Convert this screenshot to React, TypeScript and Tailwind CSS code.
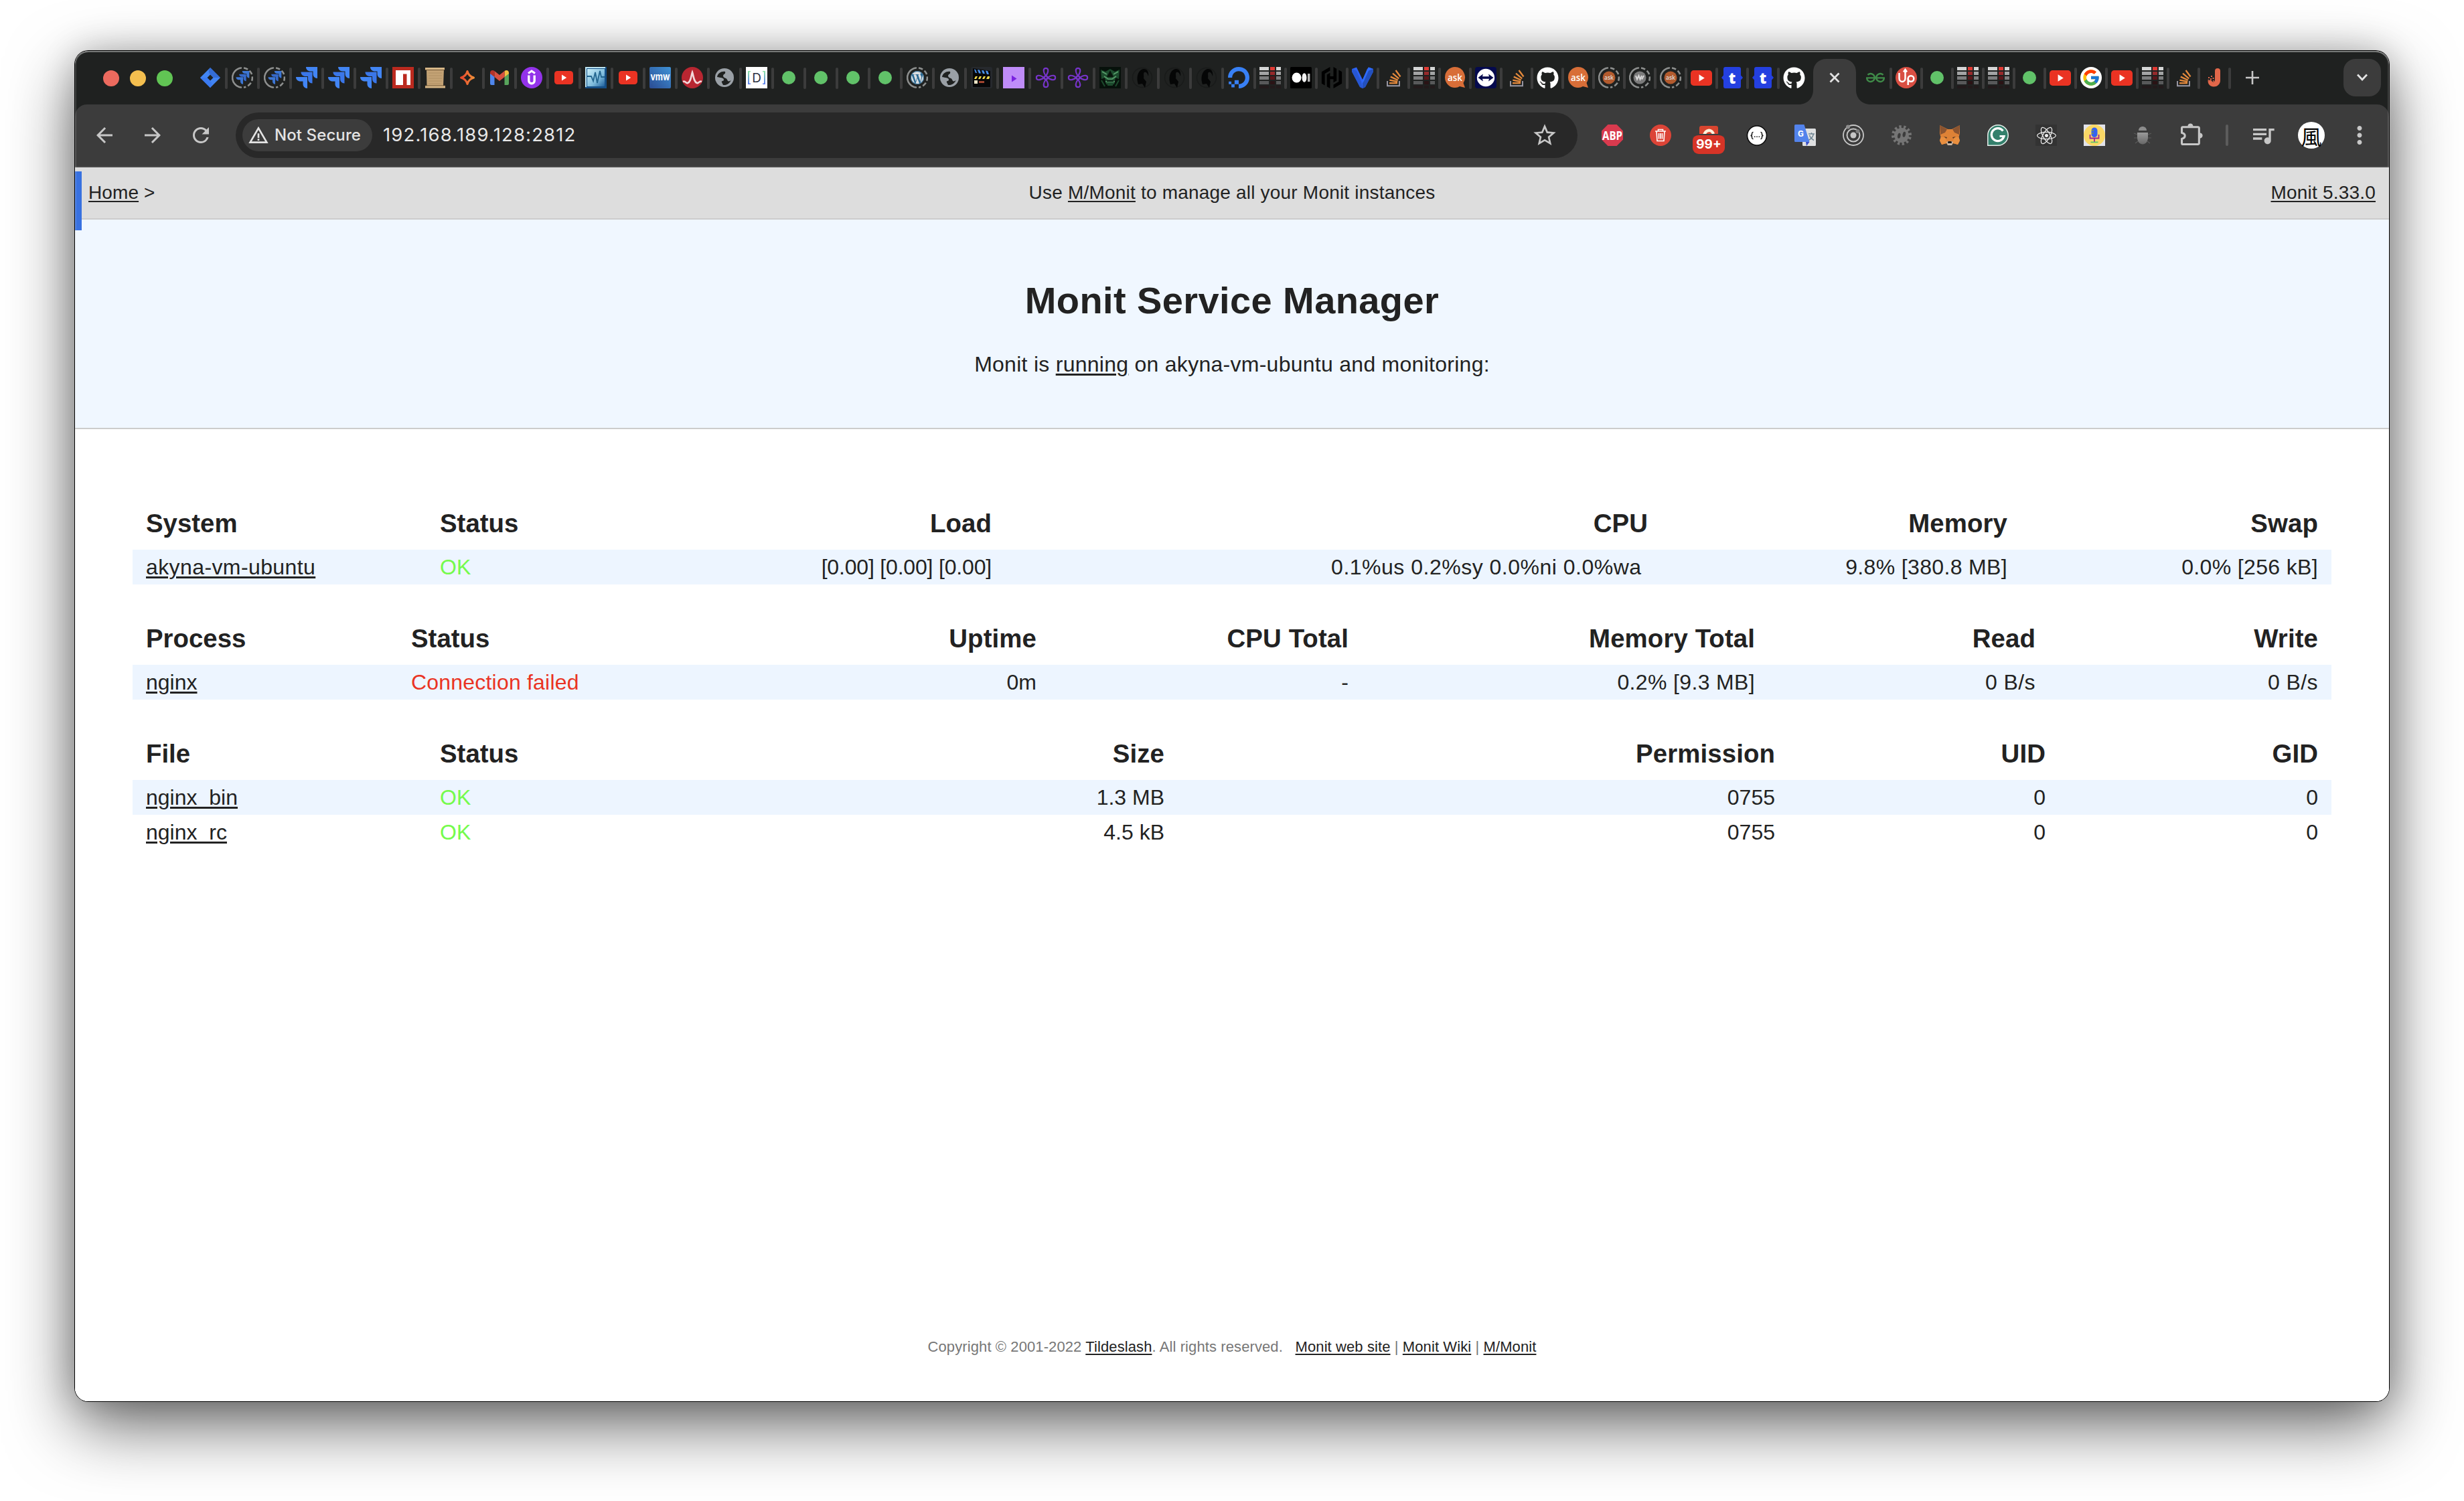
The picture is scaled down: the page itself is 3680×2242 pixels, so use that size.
import React from "react";
import { FcGoogle } from "react-icons/fc";
import { FaGithub, FaReact } from "react-icons/fa";
import {
  MdArrowBack,
  MdArrowForward,
  MdRefresh,
  MdStarBorder,
  MdMoreVert,
  MdQueueMusic,
  MdWarningAmber,
} from "react-icons/md";
import {
  SiWordpress,
  SiDigitalocean,
  SiHashicorp,
  SiGeeksforgeeks,
} from "react-icons/si";

/* ---------- favicons ---------- */

const JiraDiamond = () => (
  <svg className="size-8" viewBox="0 0 32 32">
    <path d="M16 1 31 16 16 31 1 16Z" fill="#4285f4" />
    <path d="M16 1c-3 4-3 7 0 10l5 5 10 0Z" fill="#2f62c9" opacity=".7" />
    <path d="M16 31c3-4 3-7 0-10l-5-5H1Z" fill="#3b7bf2" />
    <path d="M16 11.500 20.500 16 16 20.500 11.500 16Z" fill="#1f2120" />
  </svg>
);

const arrowPath = "M0 0H17V17C13 17 10.500 14 10.500 10.500V6.500H7C3 6.500 0 4 0 0Z";

const Arrows = () => (
  <>
    <path d={arrowPath} transform="translate(15 0)" fill="#4285f4" />
    <path d={arrowPath} transform="translate(7.500 7.500)" fill="#3a76e8" />
    <path d={arrowPath} transform="translate(0 15)" fill="#4285f4" />
  </>
);

const JiraArrows = () => (
  <svg className="size-8" viewBox="0 0 32 32">
    <Arrows />
  </svg>
);

const DashedRing = () => (
  <>
    <path d="M14 1.500A14.600 14.600 0 0 0 14 30.500" fill="none" stroke="#8d8f8e" strokeWidth="2.600" strokeLinecap="round" />
    <path
      d="M18 1.500A14.600 14.600 0 0 1 18 30.500"
      fill="none"
      stroke="#8d8f8e"
      strokeWidth="2.600"
      strokeDasharray="6.500 3.200"
    />
  </>
);

const JiraPending = () => (
  <svg className="size-8" viewBox="0 0 32 32">
    <DashedRing />
    <g transform="translate(6.500 6) scale(.62)" opacity=".85">
      <Arrows />
    </g>
  </svg>
);

const Npm = () => (
  <svg className="size-8" viewBox="0 0 32 32">
    <path d="M0 0H32V32H0Z" fill="#bb2a1f" />
    <path d="M5 5H27V27H21.500V10.500H16V27H5Z" fill="#fff" />
  </svg>
);

const Scroll = () => (
  <svg className="size-8" viewBox="0 0 32 32">
    <path d="M3 3H29L28 29H3.500Z" fill="#c3a274" />
    <path d="M1 1H30V5H1ZM1 28H31V31.500H1Z" fill="#d8b888" />
    <path d="M1 4.500H30M1 28H31" stroke="#6d5233" strokeWidth="1.200" />
    <path d="M6 9H26M6 13H26M6 17H26M6 21H26M6 25H24" stroke="#b09064" strokeWidth="1" />
  </svg>
);

const Spark = () => (
  <svg className="size-8" viewBox="0 0 32 32">
    <defs>
      <linearGradient id="spark" x1="0" x2="1">
        <stop offset="0" stopColor="#e8452c" />
        <stop offset="1" stopColor="#f08f3a" />
      </linearGradient>
    </defs>
    <path
      d="M16 6.500C17.500 12 20 14.500 25.500 16C20 17.500 17.500 20 16 25.500C14.500 20 12 17.500 6.500 16C12 14.500 14.500 12 16 6.500Z"
      fill="none"
      stroke="url(#spark)"
      strokeWidth="3"
      strokeLinejoin="round"
    />
  </svg>
);

const Gmail = () => (
  <svg className="size-8" viewBox="0 0 32 32">
    <path d="M2 9V25a2 2 0 0 0 2 2H8.500V14Z" fill="#4f86ec" />
    <path d="M30 9V25a2 2 0 0 1-2 2H23.500V14Z" fill="#58a55c" />
    <path d="M2 9C2 5 5.500 4 8.500 6V15L2 10Z" fill="#b5332a" />
    <path d="M30 9C30 5 26.500 4 23.500 6V15L30 10Z" fill="#f2be42" />
    <path d="M8.500 6 16 12 23.500 6V15L16 21 8.500 15Z" fill="#d85140" />
  </svg>
);

const Udemy = () => (
  <svg className="size-8" viewBox="0 0 32 32">
    <circle cx="16" cy="16" r="16" fill="#9333ea" />
    <path d="M11 9.500 16 6 21 9.500" fill="none" stroke="#fff" strokeWidth="3" />
    <path d="M11.800 12.500V20.500a4.200 4.200 0 0 0 8.400 0V12.500" fill="none" stroke="#fff" strokeWidth="3.400" />
  </svg>
);

const YouTube = () => (
  <svg className="h-5 w-7" viewBox="0 0 28 20">
    <rect width="28" height="20" rx="4.500" fill="#ea3323" />
    <path d="M11 5.500 18.200 10 11 14.500Z" fill="#fff" />
  </svg>
);

const YouTubeLarge = () => (
  <svg className="h-[23px] w-8" viewBox="0 0 28 20">
    <rect width="28" height="20" rx="4" fill="#ea3323" />
    <path d="M11 5.500 18.200 10 11 14.500Z" fill="#fff" />
  </svg>
);

const Monitor = () => (
  <svg className="size-8" viewBox="0 0 32 32">
    <defs>
      <linearGradient id="mon" x1="0" y1="0" x2="1" y2="1">
        <stop offset="0" stopColor="#c9eef8" />
        <stop offset=".6" stopColor="#7fbcdc" />
        <stop offset="1" stopColor="#1d5f9c" />
      </linearGradient>
    </defs>
    <path d="M0 0H32V32H0Z" fill="#154f86" />
    <path d="M0 0H30V2H2V30H0Z" fill="#bfe7f4" />
    <path d="M3 3H29V29H3Z" fill="url(#mon)" />
    <path d="M3 14H9L12 21 15 8 18 24 22 6 24 15H29" fill="none" stroke="#23668f" strokeWidth="1.800" />
  </svg>
);

const Vmw = () => (
  <svg className="size-8" viewBox="0 0 32 32">
    <defs>
      <linearGradient id="vmw" x1="1" y1="0" x2="0" y2="1">
        <stop offset="0" stopColor="#3f92d6" />
        <stop offset="1" stopColor="#2a4b92" />
      </linearGradient>
    </defs>
    <rect width="32" height="32" rx="2" fill="url(#vmw)" />
    <text x="16" y="20" textAnchor="middle" fontSize="15" fontWeight="700" textLength="29" lengthAdjust="spacingAndGlyphs" fill="#fff" fontFamily="Inter, sans-serif">vmw</text>
  </svg>
);

const RedPulse = () => (
  <svg className="size-8" viewBox="0 0 32 32">
    <circle cx="16" cy="16" r="16" fill="#b82631" />
    <path d="M2 22C6 20 6 25 9 24C14 22 14 14 16 8C18 14 18 22 23 24C26 25 26 20 30 22" fill="none" stroke="#f3d9dc" strokeWidth="2.600" />
  </svg>
);

const Globe = () => (
  <svg className="size-7" viewBox="0 0 28 28">
    <circle cx="14" cy="14" r="14" fill="#9aa0a6" />
    <path d="M3 13C8 14 13 14 13 17C13 20 9 18 10 21L12 25C18 25.500 22 22 23.500 18C21 20 19 20 18 17C17 14 12 15 12 11C13 8 16 9 15 5C10 4 4 7 3 13Z" fill="#1f2120" />
  </svg>
);

const BracketD = () => (
  <svg className="size-8" viewBox="0 0 32 32">
    <defs>
      <linearGradient id="brk" x1="0" y1="0" x2="0" y2="1">
        <stop offset="0" stopColor="#8ee6a4" />
        <stop offset="1" stopColor="#5b7cf0" />
      </linearGradient>
    </defs>
    <path d="M0 0H32V32H0Z" fill="#fff" />
    <path d="M7 6H3V26H7V24.500H5V7.500H7ZM25 6H29V26H25V24.500H27V7.500H25Z" fill="url(#brk)" />
    <text x="16" y="22.500" textAnchor="middle" fontSize="19" fill="#2b3240" fontFamily="Inter, sans-serif">D</text>
  </svg>
);

const Dot = () => <span className="size-5 rounded-full bg-[#61c269]" />;

const WordpressPending = () => (
  <span className="relative flex size-8 items-center justify-center">
    <svg className="absolute inset-0 size-8" viewBox="0 0 32 32">
      <DashedRing />
    </svg>
    <span className="flex size-5 items-center justify-center rounded-full bg-[#d9dde0]">
      <SiWordpress className="size-5 text-[#2b6a94]" />
    </span>
  </span>
);

const Clapper = () => (
  <svg className="size-8" viewBox="0 0 32 32">
    <rect width="32" height="32" rx="3" fill="#26292d" />
    <path d="M3 2 29 6V30H3Z" fill="#060708" />
    <path d="M5 3.500 27 6V11L5 9Z" fill="#0c1016" />
    <path d="M5 3.500 7 4 9 9H7ZM10 4 13 4.500 15 9.500H12ZM16 5 19 5.300 21 10H18ZM22 5.500 25 6 27 11H24Z" fill="#4a94f0" />
    <path d="M7 14H10L8 18H5ZM13 14H16L14 18H11ZM19 14H22L20 18H17ZM25 14H28V16L27 18H23Z" fill="#f2dc4c" />
    <path d="M5 20H10V25H5Z" fill="#e9e2c4" />
    <path d="M12 21H20V24H12Z" fill="#a1452f" />
  </svg>
);

const PurplePlay = () => (
  <svg className="size-8" viewBox="0 0 32 32">
    <path d="M0 0H32V32H0Z" fill="#bf8cf8" />
    <path d="M13 12.500 20.500 17.500 13 22.500Z" fill="#7a22e0" />
  </svg>
);

const Clover = () => (
  <svg className="size-8" viewBox="0 0 32 32">
    <g fill="none" stroke="#7634c8" strokeWidth="2.200">
      <path d="M16 13.500C13 9 12.500 7 12.800 4.500C13.200 1 18.800 1 19.200 4.500C19.500 7 19 9 16 13.500Z" />
      <path d="M16 18.500C13 23 12.500 25 12.800 27.500C13.200 31 18.800 31 19.200 27.500C19.500 25 19 23 16 18.500Z" />
      <path d="M13.500 16C9 13 7 12.500 4.500 12.800C1 13.200 1 18.800 4.500 19.200C7 19.500 9 19 13.500 16Z" />
      <path d="M18.500 16C23 13 25 12.500 27.500 12.800C31 13.200 31 18.800 27.500 19.200C25 19.500 23 19 18.500 16Z" />
      <circle cx="16" cy="16" r="2.500" />
    </g>
  </svg>
);

const GreenFace = () => (
  <svg className="size-8" viewBox="0 0 32 32">
    <path d="M0 0H32V32H0Z" fill="#07110b" />
    <path d="M2 4 9 7 16 3 23 7 30 4 29 18 24 16 22 26H10L8 16 3 18Z" fill="#1d4c2e" />
    <path d="M4 7 11 11M28 7 21 11M7 14 13 18H19L25 14M9 22H23" stroke="#5aa06d" strokeWidth="1.600" fill="none" />
    <path d="M16 5 21 15H11Z" fill="#08140c" />
    <path d="M11 20H21V22H11Z" fill="#0b2013" />
    <path d="M3 20 8 29M29 20 24 29M12 27H20" stroke="#1c4a2c" strokeWidth="2" />
  </svg>
);

const Goat = () => (
  <svg className="size-8" viewBox="0 0 32 32">
    <circle cx="16" cy="16" r="14.500" fill="none" stroke="#191b1a" strokeWidth="1.500" />
    <path d="M10 26C7 18 8 6 17 3C24 2 26 8 25 14C24 10 22 7 19 8C17 10 19 14 18 17L22 22 20 31 16 25Z" fill="#050606" />
  </svg>
);

const DigitalOcean = () => <SiDigitalocean className="size-8 text-[#3880f5]" />;

const stripeSides = ["#d4d5d5", "#a3a4a5", "#7c7d7e", "#58595a", "#231a1b"];
const stripeMids = ["#e03a34", "#962a2b", "#5b1619", "#2a1315", "#231a1b"];
const Stripes = () => (
  <svg className="size-8" viewBox="0 0 32 32">
    {stripeSides.map((c, i) => (
      <g key={c}>
        <rect x="0" y={i * 7} width="14" height={i === 4 ? 4 : 5} fill={c} />
        <rect x="16" y={i * 7} width="7" height={i === 4 ? 4 : 5} fill={stripeMids[i]} />
        <rect x="25" y={i * 7} width="7" height={i === 4 ? 4 : 5} fill={c} />
      </g>
    ))}
  </svg>
);

const Medium = () => (
  <svg className="size-8" viewBox="0 0 32 32">
    <rect width="32" height="32" rx="1.500" fill="#000" />
    <ellipse cx="9.500" cy="16" rx="7" ry="7.500" fill="#fff" />
    <ellipse cx="21" cy="16" rx="3.500" ry="6.800" fill="#f3f3f3" />
    <path d="M26 10H29.500V22H26Z" fill="#b9b9b9" />
  </svg>
);

const Hashicorp = () => <SiHashicorp className="size-8 text-black" />;

const Vagrant = () => (
  <svg className="size-8" viewBox="0 0 32 32">
    <path d="M0 3 7 .5 16 19 25 .5 32 3V7L20 30 16 32 12 30 0 7Z" fill="#2e63f5" />
    <path d="M23 3 32 3V7L20 30 16 32V24Z" fill="#2350bd" />
    <path d="M23 3 25 .5 32 3 25 5.500 18 21 16 24V19Z" fill="#2e6bff" />
    <path d="M0 3 7 5.500 14 22 16 32 12 30 0 7Z" fill="#2350bd" opacity=".6" />
  </svg>
);

const StackOverflow = () => (
  <svg className="size-8" viewBox="0 0 32 32">
    <path d="M7 21V28.200H25V21" fill="none" stroke="#9c9aa6" strokeWidth="1.900" />
    <path d="M10 24.200H22" stroke="#e58a3c" strokeWidth="2.300" />
    <path d="M10.300 19.700 22.200 22" stroke="#e58a3c" strokeWidth="2.300" />
    <path d="M11.800 14.600 22.800 19.800" stroke="#e58a3c" strokeWidth="2.300" />
    <path d="M15 9.600 24.200 17.300" stroke="#e58a3c" strokeWidth="2.300" />
    <path d="M19.500 5 26.500 14.500" stroke="#e58a3c" strokeWidth="2.300" />
  </svg>
);

const Ask = () => (
  <svg className="size-8" viewBox="0 0 32 32">
    <path d="M16 0A15 15.500 0 1 0 16 31C19 31 21 30 23 29L31 31 28.500 24A15 15.500 0 0 0 16 0Z" fill="#d86e38" />
    <text x="16" y="20.500" textAnchor="middle" fontSize="15" fontWeight="600" textLength="22" lengthAdjust="spacingAndGlyphs" fill="#fff" fontFamily="Open Sans, sans-serif">ask</text>
  </svg>
);

const AskPending = () => (
  <svg className="size-8" viewBox="0 0 32 32">
    <DashedRing />
    <circle cx="16" cy="16" r="9.500" fill="#b35b2e" />
    <text x="16" y="19" textAnchor="middle" fontSize="9.500" fontWeight="600" textLength="14" lengthAdjust="spacingAndGlyphs" fill="#ddd" fontFamily="Open Sans, sans-serif">ask</text>
  </svg>
);

const VvPending = () => (
  <svg className="size-8" viewBox="0 0 32 32">
    <DashedRing />
    <circle cx="16" cy="16" r="9.500" fill="#7b7b7b" />
    <path d="M10 13 12 18.500 14.500 13 16.500 18.500 19 13M19 18.500 22 13" fill="none" stroke="#d8d8d8" strokeWidth="2" />
  </svg>
);

const TeamViewer = () => (
  <svg className="size-8" viewBox="0 0 32 32">
    <rect width="32" height="32" rx="4" fill="#050a4e" />
    <circle cx="16" cy="16" r="13.200" fill="#fff" />
    <path d="M4.500 16 12 10.500 11 14.200H21L20 10.500 27.500 16 20 21.500 21 17.800H11L12 21.500Z" fill="#050a4e" />
  </svg>
);

const Github = () => <FaGithub className="size-[33px] text-white" />;

const TabT = () => (
  <svg className="size-8 overflow-visible" viewBox="0 0 32 32">
    <path d="M6 0H26A3 3 0 0 1 29 3V12.500L32 16 29 19.500V29A3 3 0 0 1 26 32H6A3 3 0 0 1 3 29V19.500L0 16 3 12.500V3A3 3 0 0 1 6 0Z" fill="#2440e0" />
    <text x="16" y="24.500" textAnchor="middle" fontSize="23" fontWeight="800" fill="#fff" fontFamily="Open Sans, sans-serif">t</text>
  </svg>
);

const Geeks = () => <SiGeeksforgeeks className="size-[28px] text-[#3f8a48]" />;

const Up = () => (
  <svg className="size-8" viewBox="0 0 32 32">
    <circle cx="16" cy="16" r="16" fill="#d94f43" />
    <path d="M5.500 9V17C5.500 23.500 14.500 23.500 14.500 17V5M12 7.500 14.500 4 17 7.500" fill="none" stroke="#fff" strokeWidth="2.500" />
    <circle cx="23" cy="17.500" r="4.300" fill="none" stroke="#fff" strokeWidth="2.500" />
    <path d="M18.700 17V27" stroke="#fff" strokeWidth="2.500" />
  </svg>
);

const Google = () => (
  <span className="flex size-8 items-center justify-center rounded-full bg-white">
    <FcGoogle className="size-7" />
  </span>
);

const JHook = () => (
  <svg className="size-8" viewBox="0 0 32 32">
    <path d="M17 6a4 4 0 0 1 8 0V20C25 32 7 33 6.500 21L11 19 13 22C15 23 17 22 17 19Z" fill="#e2674a" />
    <path d="M7 15h2v2H7ZM11 13h2v2h-2ZM10 17h2v2h-2ZM13.500 16h2v2h-2ZM6.500 19h2v1.500h-2ZM14 20h1.500v2H14Z" fill="#e2674a" />
  </svg>
);

const Tab48 = [
  JiraDiamond, JiraPending, JiraPending, JiraArrows, JiraArrows, JiraArrows, Npm, Scroll, Spark, Gmail, Udemy,
  YouTube, Monitor, YouTube, Vmw, RedPulse, Globe, BracketD, Dot, Dot, Dot, Dot, WordpressPending, Globe, Clapper,
  PurplePlay, Clover, Clover, GreenFace, Goat, Goat, Goat, DigitalOcean,
];
const Tab46 = [
  Stripes, Medium, Hashicorp, Vagrant, StackOverflow, Stripes, Ask, TeamViewer, StackOverflow, Github, Ask,
  AskPending, VvPending, AskPending, YouTubeLarge, TabT, TabT, Github,
];
const TabAfter = [
  Geeks, Up, Dot, Stripes, Stripes, Dot, YouTubeLarge, Google, YouTubeLarge, Stripes, StackOverflow, JHook,
];

function Tab({ wide, sep = true, children }: { wide?: boolean; sep?: boolean; children: React.ReactNode }) {
  return (
    <div className={wide ? "relative flex w-12 shrink-0 items-center justify-center" : "relative flex w-[46px] shrink-0 items-center justify-center"}>
      {children}
      {sep && <span className="absolute top-[25px] -right-0.5 h-8 w-1 rounded-full bg-[#3c3c3c]" />}
    </div>
  );
}

function TabStrip() {
  return (
    <div className="flex h-20 bg-[#1f2120]">
      <div className="flex w-[178px] items-center gap-4 pt-0.5 pl-[42px]">
        <span className="size-6 rounded-full bg-[#ec6a5e]" />
        <span className="size-6 rounded-full bg-[#f4bf4f]" />
        <span className="size-6 rounded-full bg-[#61c554]" />
      </div>
      {Tab48.map((Icon, i) => (
        <Tab key={i} wide>
          <Icon />
        </Tab>
      ))}
      {Tab46.map((Icon, i) => (
        <Tab key={i} sep={i < Tab46.length - 1}>
          <Icon />
        </Tab>
      ))}
      <div className="relative flex w-[76px] shrink-0 items-end justify-center">
        <svg className="absolute bottom-0 -left-4 h-[68px] w-[108px]" viewBox="0 0 108 68">
          <path d="M0 68C14 68 22 58 22 46V20C22 8 30 0 42 0H66C78 0 86 8 86 20V46C86 58 94 68 108 68Z" fill="#3c3c3c" />
        </svg>
        <svg className="relative mb-8 size-4" viewBox="0 0 16 16">
          <path d="M1.500 1.500 14.500 14.500M14.500 1.500 1.500 14.500" stroke="#e3e3e3" strokeWidth="2.800" />
        </svg>
      </div>
      {TabAfter.map((Icon, i) => (
        <Tab key={i}>
          <Icon />
        </Tab>
      ))}
      <div className="flex w-[68px] items-center justify-center">
        <svg className="size-5" viewBox="0 0 20 20">
          <path d="M10 0V20M0 10H20" stroke="#c7c7c7" strokeWidth="2.600" />
        </svg>
      </div>
      <div className="ml-auto flex w-[68px] items-center">
        <span className="flex size-14 items-center justify-center rounded-[18px] bg-[#3c3c3c]">
          <svg className="h-3 w-4" viewBox="0 0 16 12">
            <path d="M1 1.500 8 9 15 1.500" fill="none" stroke="#e3e3e3" strokeWidth="2.800" />
          </svg>
        </span>
      </div>
    </div>
  );
}

/* ---------- extensions ---------- */

const Abp = () => (
  <svg className="size-8" viewBox="0 0 32 32">
    <path d="M9.400 0H22.600L32 9.400V22.600L22.600 32H9.400L0 22.600V9.400Z" fill="#d93a4e" />
    <text x="16" y="22.500" textAnchor="middle" fontSize="18" fontWeight="700" textLength="30" lengthAdjust="spacingAndGlyphs" fill="#fff" fontFamily="Open Sans, sans-serif">ABP</text>
  </svg>
);

const Trash = () => (
  <svg className="size-8" viewBox="0 0 32 32">
    <circle cx="16" cy="16" r="16" fill="#dc4437" />
    <path d="M8 10H24M12.500 10V7.500H19.500V10M10 10 11 24.500H21L22 10M13.500 13V21.500M16 13V21.500M18.500 13V21.500" fill="none" stroke="#fff" strokeWidth="1.600" />
  </svg>
);

const Count = () => (
  <span className="relative size-8">
    <svg className="size-8" viewBox="0 0 32 32">
      <rect x="2" y="2" width="28" height="28" rx="3" fill="#d9452f" />
      <path d="M9.500 16A7 8 0 0 1 23 14" fill="none" stroke="#fff3dc" strokeWidth="4.500" />
    </svg>
    <span className="absolute top-[14px] -left-2 flex h-[30px] w-12 items-center justify-center rounded-[9px] border-t-2 border-[#3c3c3c] bg-[#d73427] font-['Inter'] text-[19px] font-bold text-white">
      99+
    </span>
  </span>
);

const Braces = () => (
  <svg className="size-8" viewBox="0 0 32 32">
    <circle cx="16" cy="16.500" r="14.500" fill="#fff" stroke="#0b0b0b" strokeWidth="1.600" />
    <g fill="none" stroke="#111" strokeWidth="1.500">
      <path d="M10.500 11.500C8.500 11.500 8.500 12.500 8.500 14.500C8.500 16 8 16.500 6.500 16.500C8 16.500 8.500 17 8.500 18.500C8.500 20.500 8.500 21.500 10.500 21.500" />
      <path d="M21.500 11.500C23.500 11.500 23.500 12.500 23.500 14.500C23.500 16 24 16.500 25.500 16.500C24 16.500 23.500 17 23.500 18.500C23.500 20.500 23.500 21.500 21.500 21.500" />
    </g>
    <path d="M12 17.500H13.500V19H12ZM15.300 17.500H16.800V19H15.300ZM18.600 17.500H20.100V19H18.600Z" fill="#111" />
  </svg>
);

const Translate = () => (
  <svg className="size-8" viewBox="0 0 32 32">
    <rect x="12" y="6" width="20" height="26" rx="1.500" fill="#dfe0e1" />
    <path d="M21 14H30M25.500 12V14M28.500 14C27.500 19 24 22 21 23.500M22.500 16C23.500 19 26.500 22 29 23.500" fill="none" stroke="#6f8593" strokeWidth="1.500" />
    <path d="M17 26H22.500L18 32Z" fill="#3a4fc4" />
    <path d="M1.500 0H14.500L22.500 26H1.500A1.500 1.500 0 0 1 0 24.500V1.500A1.500 1.500 0 0 1 1.500 0Z" fill="#5383ec" />
    <text x="9.500" y="17.500" textAnchor="middle" fontSize="13" fontWeight="700" fill="#fff" fontFamily="Roboto, sans-serif">G</text>
  </svg>
);

const Rings = () => (
  <svg className="size-8" viewBox="0 0 32 32">
    <circle cx="16" cy="16" r="15" fill="none" stroke="#c6c6c6" strokeWidth="1.800" />
    <circle cx="16" cy="16" r="9.500" fill="none" stroke="#c6c6c6" strokeWidth="2" />
    <circle cx="16" cy="16" r="4.500" fill="#c6c6c6" />
    <circle cx="8" cy="3.500" r="3" fill="#8d8d8d" />
    <circle cx="22.500" cy="10" r="3" fill="#7d7d7d" />
  </svg>
);

const GearMark = () => (
  <svg className="size-8" viewBox="0 0 32 32">
    <g transform="rotate(12 16 16)">
      <circle cx="16" cy="16" r="12.500" fill="none" stroke="#757575" strokeWidth="5" strokeDasharray="3.200 3.350" />
      <circle cx="16" cy="16" r="11" fill="#757575" />
      <ellipse cx="12.500" cy="17.500" rx="2.200" ry="4" fill="#3c3c3c" />
      <ellipse cx="19.500" cy="14" rx="2.200" ry="4" fill="#3c3c3c" />
    </g>
  </svg>
);

const Fox = () => (
  <svg className="size-8" viewBox="0 0 32 32">
    <path d="M1 1 13 7H19L31 1V13L29.500 19 31 24 28 30 21 28 19 31H13L11 28 4 30 1 24 2.500 19 1 13Z" fill="#de8236" />
    <path d="M1 1 12 7 9 12 2 15ZM31 1 20 7 23 12 30 15Z" fill="#8b5430" />
    <path d="M2.500 19H9L12 27 11 28 4 30 1 24ZM29.500 19H23L20 27 21 28 28 30 31 24Z" fill="#e98f3f" />
    <path d="M7 18 12 19 11 21ZM25 18 20 19 21 21Z" fill="#5b3a22" />
    <path d="M11 26 13.500 25H18.500L21 26 19 31H13Z" fill="#c9b7a6" />
    <path d="M13.500 25H18.500L19 28H13Z" fill="#1a1a1a" />
  </svg>
);

const Grammarly = () => (
  <svg className="size-8" viewBox="0 0 32 32">
    <path d="M16 .8A15.200 15.200 0 1 1 16 31.200H.8V16A15.200 15.200 0 0 1 16 .8Z" fill="#34806c" stroke="#e7efec" strokeWidth="1.500" />
    <path d="M23.500 9.500A9.500 9.500 0 1 0 25 17.500H18.500" fill="none" stroke="#fff" strokeWidth="3.200" />
  </svg>
);

const ReactIcon = () => (
  <span className="flex size-8 items-center justify-center bg-[#333]">
    <FaReact className="size-[29px] text-[#ececec]" />
  </span>
);

const Mic = () => (
  <svg className="size-8" viewBox="0 0 32 32">
    <path d="M0 0H32V32H0Z" fill="#e2e3ea" />
    <circle cx="16" cy="16" r="16" fill="#fad866" />
    <rect x="11.500" y="4.500" width="9" height="14.500" rx="4.500" fill="#3563f0" />
    <path d="M12 9H15M12 13H15" stroke="#7f9a4a" strokeWidth="1.500" />
    <path d="M9.500 15V20.500H22.500V15M16 20.500V26" fill="none" stroke="#a0258f" strokeWidth="1.800" />
    <path d="M10.500 26.300H21.500" stroke="#5fc46a" strokeWidth="1.800" />
  </svg>
);

const Bug = () => (
  <svg className="size-8" viewBox="0 0 32 32">
    <defs>
      <linearGradient id="bug" x1="0" y1="0" x2="0" y2="1">
        <stop offset="0" stopColor="#9a9a9a" />
        <stop offset="1" stopColor="#686868" />
      </linearGradient>
    </defs>
    <path d="M10 9C10 1 22 1 22 9Z" fill="#8c8c8c" />
    <path d="M8 12H24V19C24 33 8 33 8 19Z" fill="url(#bug)" />
    <path d="M8 15 3 13M8 20H3M9 25 5 28M24 15 29 13M24 20H29M23 25 27 28" stroke="#5a5a5a" strokeWidth="1.200" />
  </svg>
);

const Puzzle = () => (
  <svg className="ml-0.5 size-[33px] -translate-y-0.5" viewBox="0 0 32 32">
    <path
      d="M1.500 14V7A1.500 1.500 0 0 1 3 5.500H25A1.500 1.500 0 0 1 26.500 7V29A1.500 1.500 0 0 1 25 30.500H3A1.500 1.500 0 0 1 1.500 29V22.500C7.500 21.500 7.500 15 1.500 14Z"
      fill="none"
      stroke="#c7c7c7"
      strokeWidth="3"
      strokeLinejoin="round"
    />
    <path d="M10 4.500C10 -1 18 -1 18 4.500ZM27.500 14C33 14 33 22 27.500 22Z" fill="#c7c7c7" />
  </svg>
);

const extensions = [Abp, Trash, Count, Braces, Translate, Rings, GearMark, Fox, Grammarly, ReactIcon, Mic, Bug, Puzzle];

function Toolbar() {
  return (
    <div className="bg-[#1f2120]">
      <div className="flex h-[94px] items-center rounded-t-[18px] border-b-2 border-[#4a4a4a] bg-[#3c3c3c] text-[#c7c7c7]">
        <div className="flex w-20 justify-center pl-2">
          <MdArrowBack className="size-9" />
        </div>
        <div className="flex w-[72px] justify-center">
          <MdArrowForward className="size-9" />
        </div>
        <div className="flex w-[72px] justify-center">
          <MdRefresh className="size-9" />
        </div>
        <div className="ml-4 flex h-[68px] w-[2004px] items-center rounded-full bg-[#282828] pr-[29px] pl-2.5">
          <div className="flex h-12 w-[194px] items-center rounded-full bg-[#3c3c3c] pl-2 text-[#e3e3e3]">
            <MdWarningAmber className="size-8 text-[#e3e3e3]" />
            <span className="ml-2 font-['Inter'] text-[24px] font-medium tracking-[0.1px] whitespace-nowrap">Not Secure</span>
          </div>
          <span className="ml-4 font-['Inter'] text-[27.500px] tracking-[1.150px] text-[#e8e8e8]">192.168.189.128:2812</span>
          <MdStarBorder className="ml-auto size-[40px]" />
        </div>
        <div className="ml-4 flex">
          {extensions.map((Icon, i) => (
            <div key={i} className="flex w-[72px] items-center justify-center">
              <Icon />
            </div>
          ))}
        </div>
        <div className="flex w-9 justify-center">
          <span className="h-8 w-1 rounded-full bg-[#5c5c5c]" />
        </div>
        <div className="flex w-[72px] justify-center">
          <MdQueueMusic className="size-10" />
        </div>
        <div className="flex w-[72px] justify-center">
          <span className="flex size-10 items-center justify-center rounded-full bg-white font-['Noto_Sans_CJK_JP',sans-serif] text-[31px] leading-none text-black">
            風
          </span>
        </div>
        <div className="flex w-[72px] justify-center">
          <MdMoreVert className="size-[42px]" />
        </div>
      </div>
    </div>
  );
}

/* ---------- Monit page ---------- */

const Link = ({ children }: { children: React.ReactNode }) => (
  <a className="underline decoration-2 underline-offset-[3px]">{children}</a>
);

const BodyLink = ({ children }: { children: React.ReactNode }) => (
  <a className="underline decoration-[3px] underline-offset-[3px]">{children}</a>
);

type Cell = { text: string; className?: string; link?: boolean };

function ServiceTable({ cols, head, rows }: { cols: string[]; head: string[]; rows: Cell[][] }) {
  return (
    <table className="mb-[43px] w-[3284px] table-fixed border-collapse">
      <colgroup>
        {cols.map((c, i) => (
          <col key={i} className={c} />
        ))}
      </colgroup>
      <thead>
        <tr className="h-[77px]">
          {head.map((h, i) => (
            <th key={h} className={i < 2 ? "px-5 text-left text-[38.400px] leading-none font-bold" : "px-5 text-right text-[38.400px] leading-none font-bold tracking-[0.1px]"}>
              {h}
            </th>
          ))}
        </tr>
      </thead>
      <tbody>
        {rows.map((r, ri) => (
          <tr key={ri} className="h-[52px] odd:bg-[#edf5ff]">
            {r.map((c, i) => (
              <td key={i} className={(i < 2 ? "px-5 text-left text-[32px] leading-[44px] whitespace-pre " : "px-5 text-right text-[32px] leading-[44px] whitespace-pre ") + (c.className ?? "")}>
                {c.link ? <BodyLink>{c.text}</BodyLink> : c.text}
              </td>
            ))}
          </tr>
        ))}
      </tbody>
    </table>
  );
}

const ok: Cell = { text: "OK", className: "text-[#75fb4c]" };
const name = (text: string, className?: string): Cell => ({ text, link: true, className });

function MonitPage() {
  return (
    <div className="relative flex grow flex-col bg-white font-['Liberation_Sans',sans-serif] text-[#222]">
      <span className="absolute top-1.5 left-0 h-[88px] w-2.5 bg-[#3871e0]" />
      <div className="grid h-[78px] grid-cols-3 items-center border-b-2 border-[#ccc] bg-[#ddd] px-5 text-[28px]">
        <span className="tracking-[0.1px]">
          <Link>Home</Link> &gt;
        </span>
        <span className="text-center tracking-[0.2px] whitespace-nowrap">
          Use <Link>M/Monit</Link> to manage all your Monit instances
        </span>
        <span className="text-right tracking-[0.200px]">
          <Link>Monit 5.33.0</Link>
        </span>
      </div>
      <div className="flex h-[313px] flex-col items-center border-b-2 border-[#ccc] bg-[#f0f7ff] pt-[89px]">
        <h1 className="text-[56px] leading-[64px] font-bold tracking-[0.4px]">Monit Service Manager</h1>
        <p className="mt-[42px] text-[32px] leading-[42px] tracking-[0.270px]">
          Monit is <BodyLink>running</BodyLink> on akyna-vm-ubuntu and monitoring:
        </p>
      </div>
      <div className="flex flex-col items-center pt-[103px]">
        <ServiceTable
          cols={["w-[439px]", "w-[402px]", "w-[462px]", "w-[980px]", "w-[537px]", "w-[464px]"]}
          head={["System", "Status", "Load", "CPU", "Memory", "Swap"]}
          rows={[
            [
              name("akyna-vm-ubuntu", "tracking-[0.4px]"),
              ok,
              { text: "[0.00] [0.00] [0.00]", className: "tracking-[-0.180px]" },
              { text: "0.1%us 0.2%sy 0.0%ni 0.0%wa ", className: "tracking-[0.500px]" },
              { text: "9.8% [380.8 MB]", className: "tracking-[0.350px]" },
              { text: "0.0% [256 kB]", className: "tracking-[0.350px]" },
            ],
          ]}
        />
        <ServiceTable
          cols={["w-[396px]", "w-[502px]", "w-[472px]", "w-[466px]", "w-[607px]", "w-[419px]", "w-[422px]"]}
          head={["Process", "Status", "Uptime", "CPU Total", "Memory Total", "Read", "Write"]}
          rows={[
            [
              name("nginx"),
              { text: "Connection failed", className: "text-[#ea3323] tracking-[0.2px]" },
              { text: "0m" },
              { text: "-" },
              { text: "0.2% [9.3 MB]", className: "tracking-[0.350px]" },
              { text: "0 B/s", className: "tracking-[0.400px]" },
              { text: "0 B/s", className: "tracking-[0.400px]" },
            ],
          ]}
        />
        <ServiceTable
          cols={["w-[439px]", "w-[402px]", "w-[720px]", "w-[912px]", "w-[404px]", "w-[407px]"]}
          head={["File", "Status", "Size", "Permission", "UID", "GID"]}
          rows={[
            [name("nginx_bin"), ok, { text: "1.3 MB" }, { text: "0755" }, { text: "0" }, { text: "0" }],
            [name("nginx_rc"), ok, { text: "4.5 kB" }, { text: "0755" }, { text: "0" }, { text: "0" }],
          ]}
        />
      </div>
      <footer className="mt-auto mb-[65px] text-center text-[22px] leading-8 tracking-[0.100px] whitespace-pre text-[#777]">
        Copyright © 2001-2022 <span className="text-[#222]"><Link>Tildeslash</Link></span>. All rights reserved.{"   "}
        <span className="text-[#222]"><Link>Monit web site</Link></span> | <span className="text-[#222]"><Link>Monit Wiki</Link></span> |{" "}
        <span className="text-[#222]"><Link>M/Monit</Link></span>
      </footer>
    </div>
  );
}

export default function App() {
  return (
    <div className="h-[2242px] w-[3680px] overflow-hidden bg-white px-28 pt-[76px]">
      <div className="rounded-[20px] shadow-[0_0_0_1px_#000,0_36px_100px_rgba(0,0,0,0.6),0_0_50px_rgba(0,0,0,0.2)]">
        <div className="relative flex h-[2017px] w-[3456px] flex-col overflow-hidden rounded-[20px] bg-white">
          <TabStrip />
          <Toolbar />
          <MonitPage />
          <div className="pointer-events-none absolute inset-0 rounded-[20px] shadow-[inset_0_2px_0_rgba(255,255,255,0.3),inset_0_0_0_2px_rgba(255,255,255,0.15)]" />
        </div>
      </div>
    </div>
  );
}
